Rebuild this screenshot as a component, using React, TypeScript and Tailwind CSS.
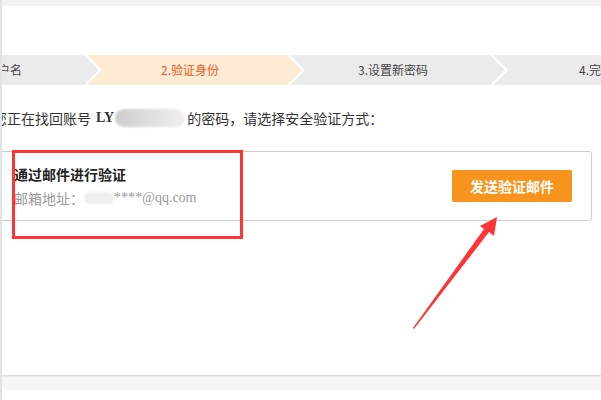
import React from "react";

// --- Data ---
const steps = [
  { label: "1.填写账户名", active: false },
  { label: "2.验证身份", active: true },
  { label: "3.设置新密码", active: false },
  { label: "4.完成", active: false },
];

function Step({ label, active }: { label: string; active: boolean }) {
  return (
    <div
      className={
        "w-[215px] h-[30px] shrink-0 mr-[-12px] flex items-center justify-center pr-[9px] text-[12px] [clip-path:polygon(0_0,200px_0,215px_50%,200px_100%,0_100%,15px_50%)] " +
        (active ? "bg-[#fdebd3] text-[#f0591c]" : "bg-[#ebebeb] text-[#444]")
      }
    >
      {label}
    </div>
  );
}

export default function App() {
  return (
    <div className="relative w-[601px] h-[400px] overflow-hidden bg-white font-['Noto_Sans_CJK_SC','Noto_Sans',sans-serif] text-[#333]">
      <div className="h-[6px] bg-[#f2f2f2]" />

      {/* steps */}
      <div className="mt-[49px] ml-[-116px] flex h-[30px]">
        {steps.map((s) => (
          <Step key={s.label} label={s.label} active={s.active} />
        ))}
      </div>

      {/* intro line */}
      <div className="mt-[23px] ml-[-7px] flex items-center h-[20px] text-[14px] leading-[20px] whitespace-nowrap">
        <span>您正在找回账号</span>
        <span className="ml-[5px] font-['Liberation_Serif',serif] font-bold">LY</span>
        <span className="ml-[1px] inline-block w-[70px] h-[18px] rounded-full bg-gradient-to-r from-[#cdcdcd] via-[#dedede] to-[#efefef] blur-[1px]" />
        <span className="ml-[2px]">的密码，请选择安全验证方式：</span>
      </div>

      {/* verify card */}
      <div className="mt-[23px] ml-[-10px] w-[602px] h-[70px] border border-[#cccccc] rounded-[3px] flex items-center justify-between pl-[23px] pr-[19px]">
        <div className="flex flex-col">
          <div className="text-[14px] leading-[20px] font-bold text-[#222]">通过邮件进行验证</div>
          <div className="mt-[4px] flex items-center text-[14px] leading-[20px] text-[#999] whitespace-nowrap">
            <span>邮箱地址：</span>
            <span className="inline-block w-[30px] h-[12px] rounded-full bg-[#eeeeee] blur-[1px]" />
            <span className="font-['Liberation_Serif',serif] text-[14px]">****@qq.com</span>
          </div>
        </div>
        <button className="w-[120px] h-[32px] rounded-[2px] bg-[#f7941e] text-white text-[14px] font-bold">
          发送验证邮件
        </button>
      </div>

      {/* page footer */}
      <div className="mt-[154px] h-[15px] border-t border-[#dcdcdc] bg-[#f6f6f6] shadow-[inset_0_1px_1px_rgba(0,0,0,0.04)]" />

      {/* left window edge */}
      <div className="absolute left-0 top-0 h-full w-[2px] bg-[#e3e3e3]" />

      {/* annotation box */}
      <div className="absolute left-[12px] top-[150px] w-[231px] h-[89px] border-[3px] border-[#ff3535]" />

      {/* annotation arrow */}
      <svg className="absolute inset-0 pointer-events-none" width="601" height="400" viewBox="0 0 601 400">
        <polygon
          points="413,328 484,229 480,226 497,217 494,236 489,232 414,329"
          fill="#ff3535"
        />
      </svg>
    </div>
  );
}
